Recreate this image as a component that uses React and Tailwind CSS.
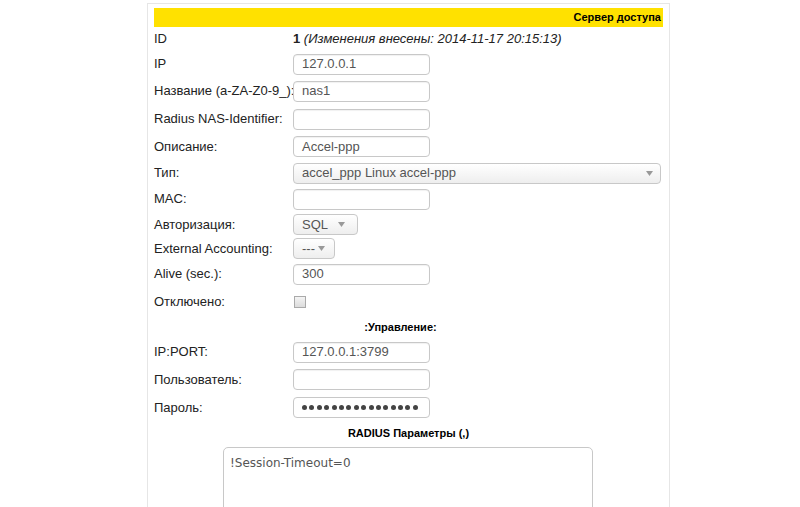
import React from 'react';

const font = { fontFamily: '"Liberation Sans", Arial, sans-serif' };

const Row = ({ h, label, children }) => (
  <div className={`flex items-center ${h}`}>
    <div className="w-[139px] shrink-0 whitespace-nowrap text-[13px] text-[#222]">{label}</div>
    <div className="flex items-center">{children}</div>
  </div>
);

const Input = ({ value = '' }) => (
  <div className="w-[137px] h-[21px] rounded-[4px] border border-[#c8c8c8] bg-white shadow-[inset_0_1px_1px_rgba(0,0,0,0.06)] flex items-center pl-[8px] text-[13px] text-[#555]">
    {value}
  </div>
);

const Arrow = () => (
  <svg width="7" height="5" viewBox="0 0 7 5" className="shrink-0">
    <path d="M0 0 L7 0 L3.5 5 Z" fill="#999" />
  </svg>
);

const Select = ({ w, value, arrowGap }) => (
  <div
    className={`${w} h-[21px] rounded-[4px] border border-[#c8c8c8] bg-gradient-to-b from-white to-[#eeeeee] flex items-center justify-between pl-[8px] ${arrowGap} text-[13px] text-[#555]`}
  >
    <span>{value}</span>
    <Arrow />
  </div>
);

const Password = () => (
  <div className="w-[137px] h-[21px] rounded-[4px] border border-[#c8c8c8] bg-white flex items-center pl-[8px] gap-[2.4px]">
    {Array.from({ length: 16 }).map((_, i) => (
      <span key={i} className="w-[5px] h-[5px] rounded-full bg-[#444]" />
    ))}
  </div>
);

export default function App() {
  return (
    <div className="w-[800px] h-[507px] bg-white overflow-hidden" style={font}>
      <div className="ml-[147px] mt-[3px] w-[523px] h-[520px] border border-[#e6e6e6] px-[6px] pt-[4px]">
        {/* Header */}
        <div className="h-[19px] bg-[#ffe100] flex items-center justify-end pr-[2px] text-[11px] font-bold text-black">
          Сервер доступа
        </div>

        <Row h="h-[24px]" label="ID">
          <span className="text-[13px] text-[#222]">
            <b>1</b> <i>(Изменения внесены: 2014-11-17 20:15:13)</i>
          </span>
        </Row>
        <Row h="h-[26px]" label="IP"><Input value="127.0.0.1" /></Row>
        <Row h="h-[28px]" label="Название (a-ZA-Z0-9_):"><Input value="nas1" /></Row>
        <Row h="h-[28px]" label="Radius NAS-Identifier:"><Input /></Row>
        <Row h="h-[27px]" label="Описание:"><Input value="Accel-ppp" /></Row>
        <Row h="h-[26px]" label="Тип:">
          <Select w="w-[368px]" value="accel_ppp Linux accel-ppp" arrowGap="pr-[7px]" />
        </Row>
        <Row h="h-[26px]" label="MAC:"><Input /></Row>
        <Row h="h-[25px]" label="Авторизация:">
          <Select w="w-[65px]" value="SQL" arrowGap="pr-[12px]" />
        </Row>
        <Row h="h-[23px]" label="External Accounting:">
          <Select w="w-[42px]" value="---" arrowGap="pr-[9px]" />
        </Row>
        <Row h="h-[28px]" label="Alive (sec.):"><Input value="300" /></Row>
        <Row h="h-[27px]" label="Отключено:">
          <div className="w-[12px] h-[12px] border border-[#aaa] bg-gradient-to-b from-[#f4f4f4] to-[#dcdcdc] ml-[1px]" />
        </Row>

        <div className="h-[24px] flex items-center justify-center text-[11px] font-bold text-black pr-[16px]">
          :Управление:
        </div>

        <Row h="h-[26px]" label="IP:PORT:"><Input value="127.0.0.1:3799" /></Row>
        <Row h="h-[29px]" label="Пользователь:"><Input /></Row>
        <Row h="h-[27px]" label="Пароль:"><Password /></Row>

        <div className="h-[24px] flex items-center justify-center text-[11px] font-bold text-black">
          RADIUS Параметры (,)
        </div>

        <div className="flex justify-center mt-[2px] pr-[1px]">
          <div
            className="w-[370px] h-[90px] rounded-[5px] border border-[#c8c8c8] bg-white px-[6px] pt-[6px] text-[12px] text-[#555]"
            style={{ fontFamily: '"DejaVu Sans", Verdana, sans-serif' }}
          >
            !Session-Timeout=0
          </div>
        </div>
      </div>
    </div>
  );
}
